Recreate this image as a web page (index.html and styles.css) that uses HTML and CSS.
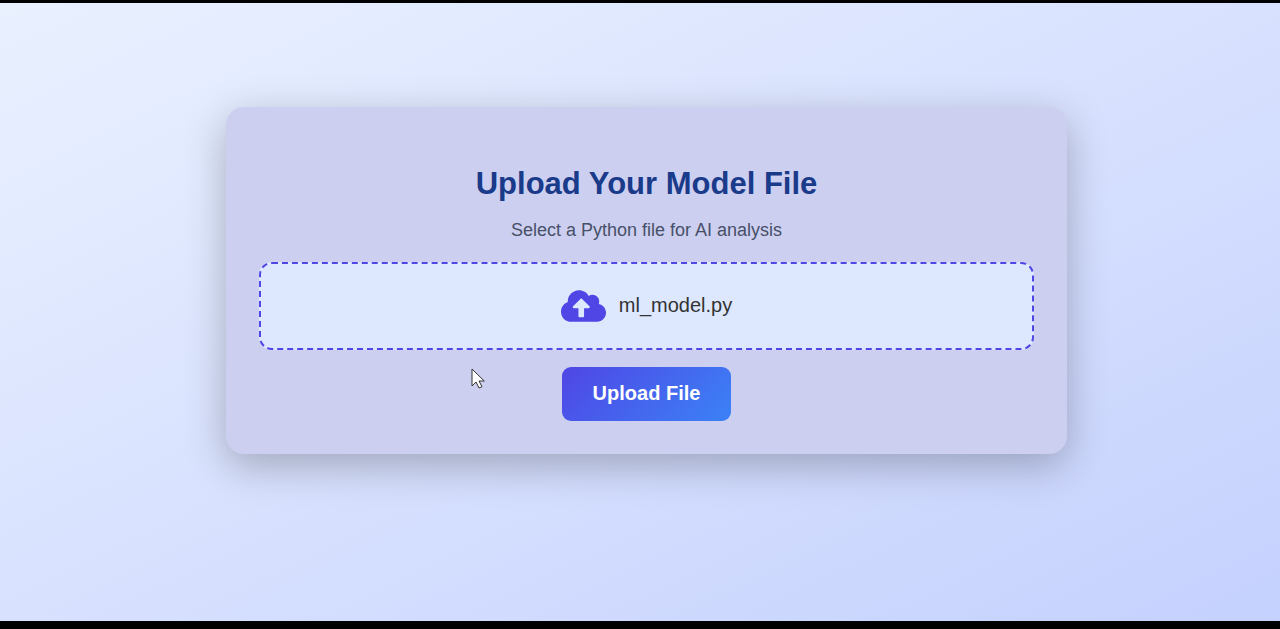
FILE: index.html
```html
<!DOCTYPE html>
<html lang="en">
<head>
<meta charset="utf-8">
<meta name="viewport" content="width=device-width, initial-scale=1">
<title>Upload Your Model File</title>
<link rel="stylesheet" href="styles.css">
</head>
<body>
<main class="page">
  <form class="card">
    <h1 class="title">Upload Your Model File</h1>
    <p class="subtitle">Select a Python file for AI analysis</p>
    <button type="button" class="dropzone">
      <svg class="cloud" viewBox="0 0 640 512" aria-hidden="true"><path fill="currentColor" d="M537.6 226.6c4.1-10.7 6.4-22.4 6.4-34.6 0-53-43-96-96-96-19.7 0-38.1 6-53.3 16.2C367 64.2 315.3 32 256 32c-88.4 0-160 71.6-160 160 0 2.7.1 5.4.2 8.1C40.2 219.8 0 273.2 0 336c0 79.5 64.5 144 144 144h368c70.7 0 128-57.3 128-128 0-61.9-44-113.6-102.4-125.4zM393.4 288H328v112c0 8.8-7.2 16-16 16h-48c-8.8 0-16-7.2-16-16V288h-65.4c-14.3 0-21.4-17.2-11.3-27.4l105.4-105.4c6.2-6.2 16.4-6.2 22.6 0l105.4 105.4c10.1 10.2 2.9 27.4-11.3 27.4z"/></svg>
      <span>ml_model.py</span>
    </button>
    <button type="button" class="upload">Upload File</button>
  </form>
</main>
<svg class="cursor" viewBox="0 0 14 22" aria-hidden="true"><path d="M1 1v17l4-4 3 6 3-1.300-3-5.700h5.300z" fill="#fff" stroke="#333" stroke-width="1"/></svg>
</body>
</html>
```
FILE: styles.css
```css
* { box-sizing: border-box; }

body {
  margin: 0;
  min-height: 100vh;
  display: flex;
  border-top: 3px solid #000;
  border-bottom: 8px solid #000;
  font-family: "Liberation Sans", Arial, sans-serif;
}

.page {
  flex: 1;
  display: flex;
  align-items: center;
  justify-content: center;
  padding: 16px 16px 80px 29px;
  background: linear-gradient(to bottom right, #e9f1ff, #d8e1fe 50%, #c5d1fe);
}

.card {
  display: flex;
  flex-direction: column;
  align-items: center;
  width: 100%;
  max-width: 841px;
  padding: 57px 33px 33px;
  border-radius: 18px;
  background: #cdcff0;
  box-shadow: 0 12px 40px rgba(0, 0, 0, 0.26);
  text-align: center;
}

.title {
  margin: 0 0 15px;
  font-size: 31px;
  line-height: 40px;
  color: #1a3a8a;
}

.subtitle {
  margin: 0 0 21px;
  font-size: 18px;
  line-height: 22px;
  color: #475069;
}

.dropzone {
  display: flex;
  align-items: center;
  justify-content: center;
  gap: 13px;
  width: 100%;
  height: 88px;
  margin-bottom: 17px;
  border: 2px dashed #4f46e5;
  border-radius: 13px;
  background: #dde8ff;
  color: #333;
  font: 20px "Liberation Sans", Arial, sans-serif;
}

.cloud {
  width: 45px;
  height: 36px;
  color: #4f46e5;
}

.upload {
  padding: 14px 31px 16px;
  border: 0;
  border-radius: 9px;
  background: linear-gradient(135deg, #4f46e5, #3b82f6);
  color: #fff;
  font: bold 20px/24px "Liberation Sans", Arial, sans-serif;
}

.cursor {
  position: absolute;
  left: 471px;
  top: 368px;
  width: 14px;
  height: 22px;
}
```
